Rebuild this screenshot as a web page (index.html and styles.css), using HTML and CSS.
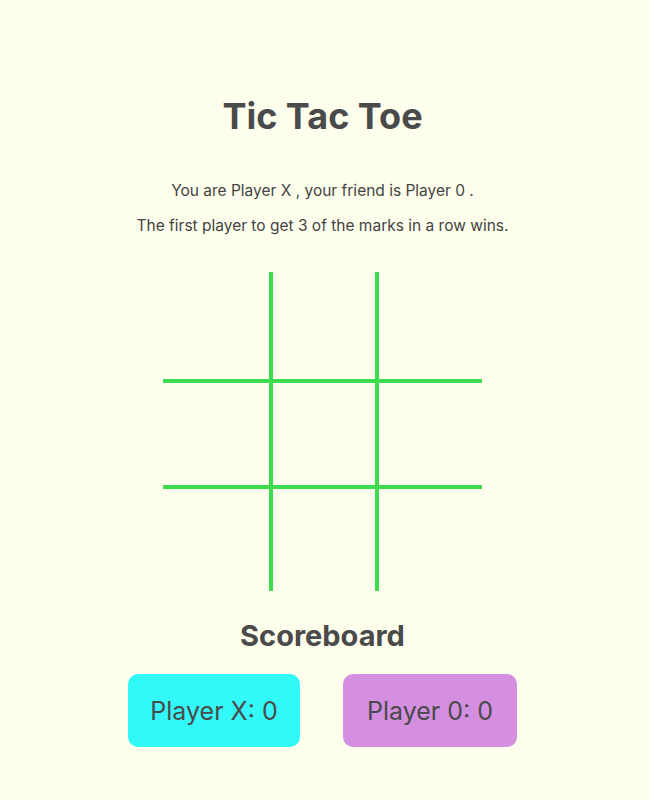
FILE: index.html
```html
<!DOCTYPE html>
<html lang="en">
<head>
<meta charset="utf-8">
<title>Tic Tac Toe</title>
<link rel="stylesheet" href="styles.css">
</head>
<body>
<main class="app">
  <h1 class="title">Tic Tac Toe</h1>
  <p class="info">You are Player X , your friend is Player 0 .</p>
  <p class="info">The first player to get 3 of the marks in a row wins.</p>
  <div class="board">
    <div class="cell"></div><div class="cell"></div><div class="cell"></div>
    <div class="cell"></div><div class="cell"></div><div class="cell"></div>
    <div class="cell"></div><div class="cell"></div><div class="cell"></div>
  </div>
  <h2 class="score-title">Scoreboard</h2>
  <div class="scores">
    <div class="score score-x">Player X: 0</div>
    <div class="score score-o">Player 0: 0</div>
  </div>
</main>
</body>
</html>
```
FILE: styles.css
```css
html, body {
  margin: 0;
  padding: 0;
  background: #fefeec;
}
body {
  font-family: Inter, "Noto Sans", sans-serif;
  color: #444444;
}
.app {
  display: flex;
  flex-direction: column;
  align-items: center;
  padding-top: 92px;
  padding-right: 4px;
}
.title {
  margin: 0 0 41px;
  font-size: 36px;
  font-weight: 700;
  color: #4a4a4a;
  line-height: 48px;
}
.info {
  margin: 0 0 15px;
  font-size: 15.5px;
  line-height: 20px;
  color: #444;
}
.board {
  margin-top: 21px;
  display: grid;
  grid-template-columns: 106px 102px 103px;
  grid-template-rows: 107px 102px 102px;
  gap: 4px;
  background: #3ddc4f;
}
.cell {
  background: #fefeec;
}
.score-title {
  margin: 25px 0 0;
  font-size: 29px;
  line-height: 40px;
  font-weight: 700;
  color: #4a4a4a;
}
.scores {
  margin-top: 18px;
  display: flex;
  gap: 43px;
}
.score {
  width: 172px;
  height: 73px;
  border-radius: 10px;
  display: flex;
  align-items: center;
  justify-content: center;
  font-size: 25px;
  color: #4a4a4a;
}
.score-x {
  background: #33f8f8;
}
.score-o {
  background: #d48fe0;
  width: 174px;
}
```
